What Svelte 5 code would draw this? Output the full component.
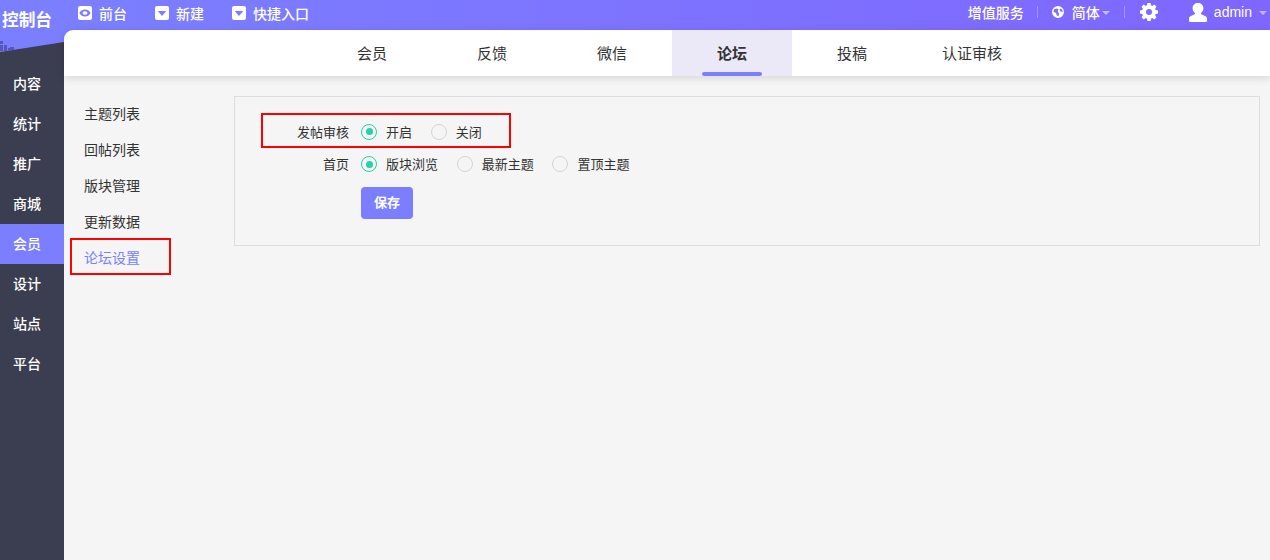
<script>
  const sideItems = ['内容', '统计', '推广', '商城', '会员', '设计', '站点', '平台'];
  const tabs = ['会员', '反馈', '微信', '论坛', '投稿', '认证审核'];
  const menu = ['主题列表', '回帖列表', '版块管理', '更新数据', '论坛设置'];
  const rows = [
    { label: '发帖审核', marked: true, options: [['开启', true], ['关闭', false]] },
    { label: '首页', marked: false, options: [['版块浏览', true], ['最新主题', false], ['置顶主题', false]] }
  ];
</script>

<div class="app">
  <aside class="side">
    <div class="brand">
      <span class="logo">控制台</span>
      <svg class="pixels" width="16" height="10" viewBox="0 0 16 10" aria-hidden="true">
        <g fill="#5558b8">
          <rect x="0" y="0" width="3" height="3" />
          <rect x="0" y="4" width="3" height="3" />
          <rect x="4" y="4" width="3" height="3" />
          <rect x="0" y="7" width="3" height="3" />
          <rect x="4" y="7" width="3" height="3" />
          <rect x="8" y="7" width="2" height="3" />
          <rect x="10" y="6" width="4" height="4" />
        </g>
      </svg>
    </div>
    <nav class="side-nav">
      {#each sideItems as item}
        <div class="side-item" class:on={item === '会员'}>{item}</div>
      {/each}
    </nav>
  </aside>

  <div class="main">
    <header class="top">
      <div class="top-left">
        <span class="link">
          <svg width="14" height="14" viewBox="0 0 14 14"><path fill="#fff" fill-rule="evenodd" d="M2 0h10a2 2 0 0 1 2 2v10a2 2 0 0 1-2 2H2a2 2 0 0 1-2-2V2a2 2 0 0 1 2-2zm5 3.500C4.200 3.500 2.200 5.300 1.400 7c.8 1.700 2.800 3.500 5.600 3.500S11.800 8.700 12.600 7C11.800 5.300 9.800 3.500 7 3.500z"/><ellipse cx="7" cy="7" rx="2.500" ry="1.800" fill="#fff"/></svg>
          前台
        </span>
        <span class="link">
          <svg width="14" height="14" viewBox="0 0 14 14"><path fill="#fff" fill-rule="evenodd" d="M2 0h10a2 2 0 0 1 2 2v10a2 2 0 0 1-2 2H2a2 2 0 0 1-2-2V2a2 2 0 0 1 2-2zm.8 5L7 10l4.200-5z"/></svg>
          新建
        </span>
        <span class="link">
          <svg width="14" height="14" viewBox="0 0 14 14"><path fill="#fff" fill-rule="evenodd" d="M2 0h10a2 2 0 0 1 2 2v10a2 2 0 0 1-2 2H2a2 2 0 0 1-2-2V2a2 2 0 0 1 2-2zm.8 5L7 10l4.200-5z"/></svg>
          快捷入口
        </span>
      </div>
      <div class="top-right">
        <span class="vip">增值服务</span>
        <i class="sep"></i>
        <span class="lang">
          <svg width="12" height="12" viewBox="0 0 12 12"><path fill="#fff" fill-rule="evenodd" d="M6 0a6 6 0 1 1 0 12A6 6 0 0 1 6 0zM2 3.500 1.500 6l2.500.8.800 2.700 1.500.8.900-2.800-1.500-2L6.500 3.500 5 2.500 3 3zM8.500 2.500 7.500 4l1 1.500 2.200.5-.5-2.300z"/></svg>
          <span class="lang-text">简体</span>
          <i class="caret dim"></i>
        </span>
        <i class="sep"></i>
        <svg class="gear" width="18" height="18" viewBox="0 0 18 18"><path fill="#fff" fill-rule="evenodd" d="M7.400 0h3.200l.4 2.300 1.300.6L14.300 1.500l2.200 2.200-1.400 2 .6 1.300 2.300.4v3.200l-2.300.4-.6 1.300 1.400 2-2.200 2.200-2-1.400-1.300.6-.4 2.300H7.400L7 15.700l-1.300-.6-2 1.400-2.200-2.200 1.400-2-.6-1.300L0 10.600V7.400L2.300 7l.6-1.300-1.400-2 2.200-2.200 2 1.400L7 2.300zM9 6a3 3 0 1 0 0 6 3 3 0 0 0 0-6z"/></svg>
        <svg class="user" width="18" height="19" viewBox="0 0 18 19"><path fill="#fff" d="M9 0c3 0 5.400 2 5.400 5.200 0 2-1 3.700-2.300 4.700-.5.500-.3 1 .3 1.300l3.600 1.800c1.300.6 2 1.300 2 2.500V18a1 1 0 0 1-1 1H1a1 1 0 0 1-1-1v-2.500c0-1.200.7-1.900 2-2.500l3.600-1.800c.6-.3.800-.8.300-1.300C4.600 8.900 3.600 7.200 3.600 5.200 3.600 2 6 0 9 0z"/></svg>
        <span class="admin">admin</span>
        <i class="caret dim"></i>
      </div>
    </header>

    <div class="tabs-wrap">
      <div class="tabs">
        {#each tabs as tab}
          <div class="tab" class:active={tab === '论坛'}>{tab}</div>
        {/each}
      </div>
    </div>

    <div class="body">
      <ul class="menu">
        {#each menu as item}
          <li class="menu-item" class:cur={item === '论坛设置'}>{item}</li>
        {/each}
      </ul>

      <section class="panel">
        {#each rows as row}
          <div class="row" class:marked={row.marked}>
            <span class="label">{row.label}</span>
            <div class="opts">
              {#each row.options as [text, checked]}
                <span class="opt">
                  <i class="radio" class:checked></i>
                  <span>{text}</span>
                </span>
              {/each}
            </div>
          </div>
        {/each}
        <button class="save" type="button">保存</button>
      </section>
    </div>
  </div>
</div>

<style>
  :global(body) {
    margin: 0;
    font-family: "Noto Sans CJK SC", "Liberation Sans", sans-serif;
  }
  .app {
    display: grid;
    grid-template-columns: 64px 1fr;
    height: 560px;
    overflow: hidden;
    background: #f5f5f5;
    color: #333;
  }
  .side {
    background: #3b3d50;
    display: flex;
    flex-direction: column;
  }
  .brand {
    position: relative;
    height: 64px;
    box-sizing: border-box;
    padding-top: 6px;
    background: #7b7fff;
    clip-path: polygon(0 0, 100% 0, 100% 42px, 0 52px);
    color: #fff;
  }
  .logo {
    display: block;
    padding-left: 2px;
    font-size: 16.700px;
    font-weight: 700;
    line-height: 26px;
    white-space: nowrap;
  }
  .pixels {
    position: absolute;
    left: 0;
    top: 41px;
  }
  .side-item {
    height: 40px;
    line-height: 38px;
    padding-right: 10px;
    box-sizing: border-box;
    text-align: center;
    font-size: 14px;
    font-weight: 500;
    color: #fff;
  }
  .side-item.on {
    background: #7b7fff;
  }
  .main {
    display: flex;
    flex-direction: column;
    min-width: 0;
  }
  .top {
    height: 30px;
    flex: none;
    background: linear-gradient(90deg, #7b7fff 0%, #7f66ff 100%);
    color: #fff;
    font-size: 14px;
    font-weight: 500;
    display: flex;
    justify-content: space-between;
    align-items: center;
  }
  .top-left {
    display: flex;
    align-items: center;
    padding-left: 14px;
    gap: 28px;
    padding-bottom: 5px;
  }
  .link {
    display: flex;
    align-items: center;
    gap: 7px;
    line-height: 14px;
  }
  .top-right {
    display: flex;
    align-items: center;
    padding-right: 3px;
    padding-bottom: 6px;
  }
  .vip { margin-right: 13px; line-height: 14px; }
  .sep {
    width: 1px;
    height: 12px;
    background: rgba(255, 255, 255, 0.3);
  }
  .lang {
    display: flex;
    align-items: center;
    margin: 0 14px;
    line-height: 14px;
  }
  .lang-text { margin: 0 2px 0 8px; }
  .caret {
    width: 0;
    height: 0;
    border: 4px solid transparent;
    border-top-color: #fff;
    border-bottom-width: 0;
    margin-top: 1px;
  }
  .caret.dim { border-top-color: rgba(255, 255, 255, 0.55); }
  .gear { margin-left: 15px; }
  .user { margin-left: 31px; }
  .admin {
    font-family: "Liberation Sans", sans-serif;
    font-weight: 400;
    margin: 0 7px;
    line-height: 14px;
  }
  .tabs-wrap {
    flex: none;
    background: #7b7fff;
    position: relative;
    z-index: 1;
  }
  .tabs {
    height: 46px;
    display: flex;
    padding-left: 248px;
    background: #fff;
    border-top-left-radius: 9px;
    box-shadow: 0 2px 8px rgba(0, 0, 0, 0.13);
  }
  .tab {
    position: relative;
    width: 120px;
    text-align: center;
    line-height: 45px;
    font-size: 15px;
    color: #333;
  }
  .tab.active {
    background: #ebe9f8;
    font-weight: 700;
  }
  .tab.active::after {
    content: "";
    position: absolute;
    left: 30px;
    right: 30px;
    bottom: 0;
    height: 4px;
    border-radius: 2px;
    background: #7b7fff;
  }
  .body {
    flex: 1;
    display: flex;
    align-items: flex-start;
    padding: 20px 10px 0 6px;
  }
  .menu {
    list-style: none;
    margin: -2px 0 0;
    padding: 0;
    width: 164px;
    flex: none;
  }
  .menu-item {
    width: 101px;
    height: 36px;
    box-sizing: border-box;
    line-height: 38px;
    padding-left: 14px;
    font-size: 14px;
    color: #333;
  }
  .menu-item.cur {
    height: 37px;
    border: 2px solid #f00;
    padding-left: 12px;
    line-height: 34px;
    color: #7b7fff;
  }
  .panel {
    flex: 1;
    height: 150px;
    box-sizing: border-box;
    border: 1px solid #ddd;
    padding-top: 16px;
    font-size: 13px;
  }
  .row {
    display: flex;
    align-items: center;
    height: 32px;
    line-height: 32px;
    box-sizing: border-box;
  }
  .row.marked {
    width: 250px;
    height: 35px;
    margin-left: 26px;
    padding-top: 2px;
    border: 2px solid #f00;
  }
  .label {
    width: 114px;
    margin-right: 12px;
    text-align: right;
    flex: none;
  }
  .row.marked .label {
    width: 86px;
  }
  .opts { display: flex; }
  .opt {
    display: flex;
    align-items: center;
    gap: 9px;
    margin-right: 18.700px;
  }
  .radio {
    width: 16px;
    height: 16px;
    box-sizing: border-box;
    border: 1px solid #d4d4d4;
    border-radius: 50%;
    position: relative;
    flex: none;
  }
  .radio.checked { border-color: #28d0ad; }
  .radio.checked::after {
    content: "";
    position: absolute;
    inset: 3.500px;
    border-radius: 50%;
    background: #28d0ad;
  }
  .save {
    display: block;
    margin: 7px 0 0 126px;
    width: 52px;
    height: 32px;
    border: 0;
    border-radius: 4px;
    background: #7b7fff;
    color: #fff;
    font: 700 13px "Noto Sans CJK SC", sans-serif;
    padding: 0 0 3px;
  }
</style>
